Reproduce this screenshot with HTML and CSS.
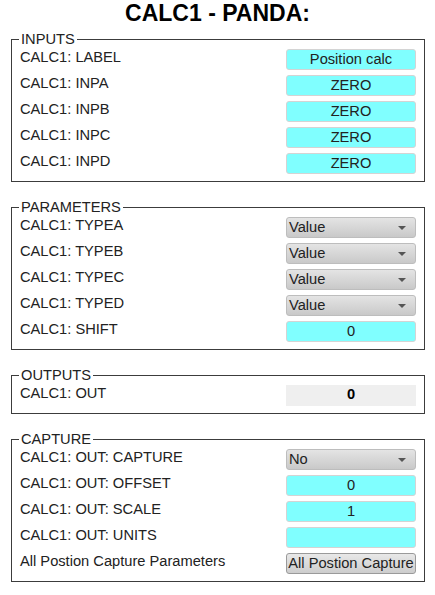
FILE: index.html
```html
<!DOCTYPE html>
<html>
<head>
<meta charset="utf-8">
<link rel="stylesheet" href="styles.css">
</head>
<body>
<h1 class="title">CALC1 - PANDA:</h1>

<fieldset class="group">
  <legend class="group-title">INPUTS</legend>
  <div class="rows">
    <div class="row"><span class="label">CALC1: LABEL</span><div class="field text">Position calc</div></div>
    <div class="row"><span class="label">CALC1: INPA</span><div class="field text">ZERO</div></div>
    <div class="row"><span class="label">CALC1: INPB</span><div class="field text">ZERO</div></div>
    <div class="row"><span class="label">CALC1: INPC</span><div class="field text">ZERO</div></div>
    <div class="row"><span class="label">CALC1: INPD</span><div class="field text">ZERO</div></div>
  </div>
</fieldset>

<fieldset class="group">
  <legend class="group-title">PARAMETERS</legend>
  <div class="rows">
    <div class="row"><span class="label">CALC1: TYPEA</span><div class="field select">Value</div></div>
    <div class="row"><span class="label">CALC1: TYPEB</span><div class="field select">Value</div></div>
    <div class="row"><span class="label">CALC1: TYPEC</span><div class="field select">Value</div></div>
    <div class="row"><span class="label">CALC1: TYPED</span><div class="field select">Value</div></div>
    <div class="row"><span class="label">CALC1: SHIFT</span><div class="field text">0</div></div>
  </div>
</fieldset>

<fieldset class="group">
  <legend class="group-title">OUTPUTS</legend>
  <div class="rows">
    <div class="row"><span class="label">CALC1: OUT</span><div class="field output">0</div></div>
  </div>
</fieldset>

<fieldset class="group">
  <legend class="group-title">CAPTURE</legend>
  <div class="rows">
    <div class="row"><span class="label">CALC1: OUT: CAPTURE</span><div class="field select">No</div></div>
    <div class="row"><span class="label">CALC1: OUT: OFFSET</span><div class="field text">0</div></div>
    <div class="row"><span class="label">CALC1: OUT: SCALE</span><div class="field text">1</div></div>
    <div class="row"><span class="label">CALC1: OUT: UNITS</span><div class="field text"></div></div>
    <div class="row"><span class="label">All Postion Capture Parameters</span><div class="field button">All Postion Capture</div></div>
  </div>
</fieldset>
</body>
</html>
```
FILE: styles.css
```css
html, body {
  margin: 0;
  padding: 0;
  background: #ffffff;
}

body {
  font-family: "Liberation Sans", Arial, sans-serif;
  font-size: 14.67px;
  color: #222222;
}

.title {
  margin: 0 0 4px 0;
  font-size: 23px;
  line-height: 26px;
  font-weight: bold;
  text-align: center;
  color: #000000;
}

.group {
  margin: 0 10px 16px 11px;
  padding: 0 8px 7px 8px;
  border: 1px solid #3c3c3c;
  min-width: 0;
}

.group-title {
  padding: 0 2px;
  margin-left: -1px;
  line-height: 18px;
  font-size: 14.67px;
  color: #222222;
}

.rows {
  display: flex;
  flex-direction: column;
  gap: 4px;
}

.row {
  display: flex;
  align-items: center;
  justify-content: space-between;
  height: 22px;
}

.label {
  line-height: 17px;
  margin-top: -3px;
}

.field {
  box-sizing: border-box;
  width: 130px;
  height: 21px;
  line-height: 19px;
  font-size: 14.67px;
  color: #222222;
  white-space: nowrap;
  overflow: hidden;
}

.text {
  background: #80ffff;
  border: 1px solid #d4d4d4;
  border-radius: 3px;
  text-align: center;
}

.select {
  position: relative;
  background: linear-gradient(#e4e4e4, #c9c9c9);
  border: 1px solid #bdbdbd;
  border-radius: 3px;
  padding-left: 2px;
  text-align: left;
}

.select::after {
  content: "";
  position: absolute;
  right: 9px;
  top: 8px;
  border-left: 4px solid transparent;
  border-right: 4px solid transparent;
  border-top: 4px solid #555555;
}

.output {
  background: #efefef;
  text-align: center;
  font-weight: bold;
  color: #000000;
}

.button {
  background: linear-gradient(#e8e8e8, #cdcdcd);
  border: 1px solid #9a9a9a;
  border-radius: 3px;
  text-align: center;
}
```
